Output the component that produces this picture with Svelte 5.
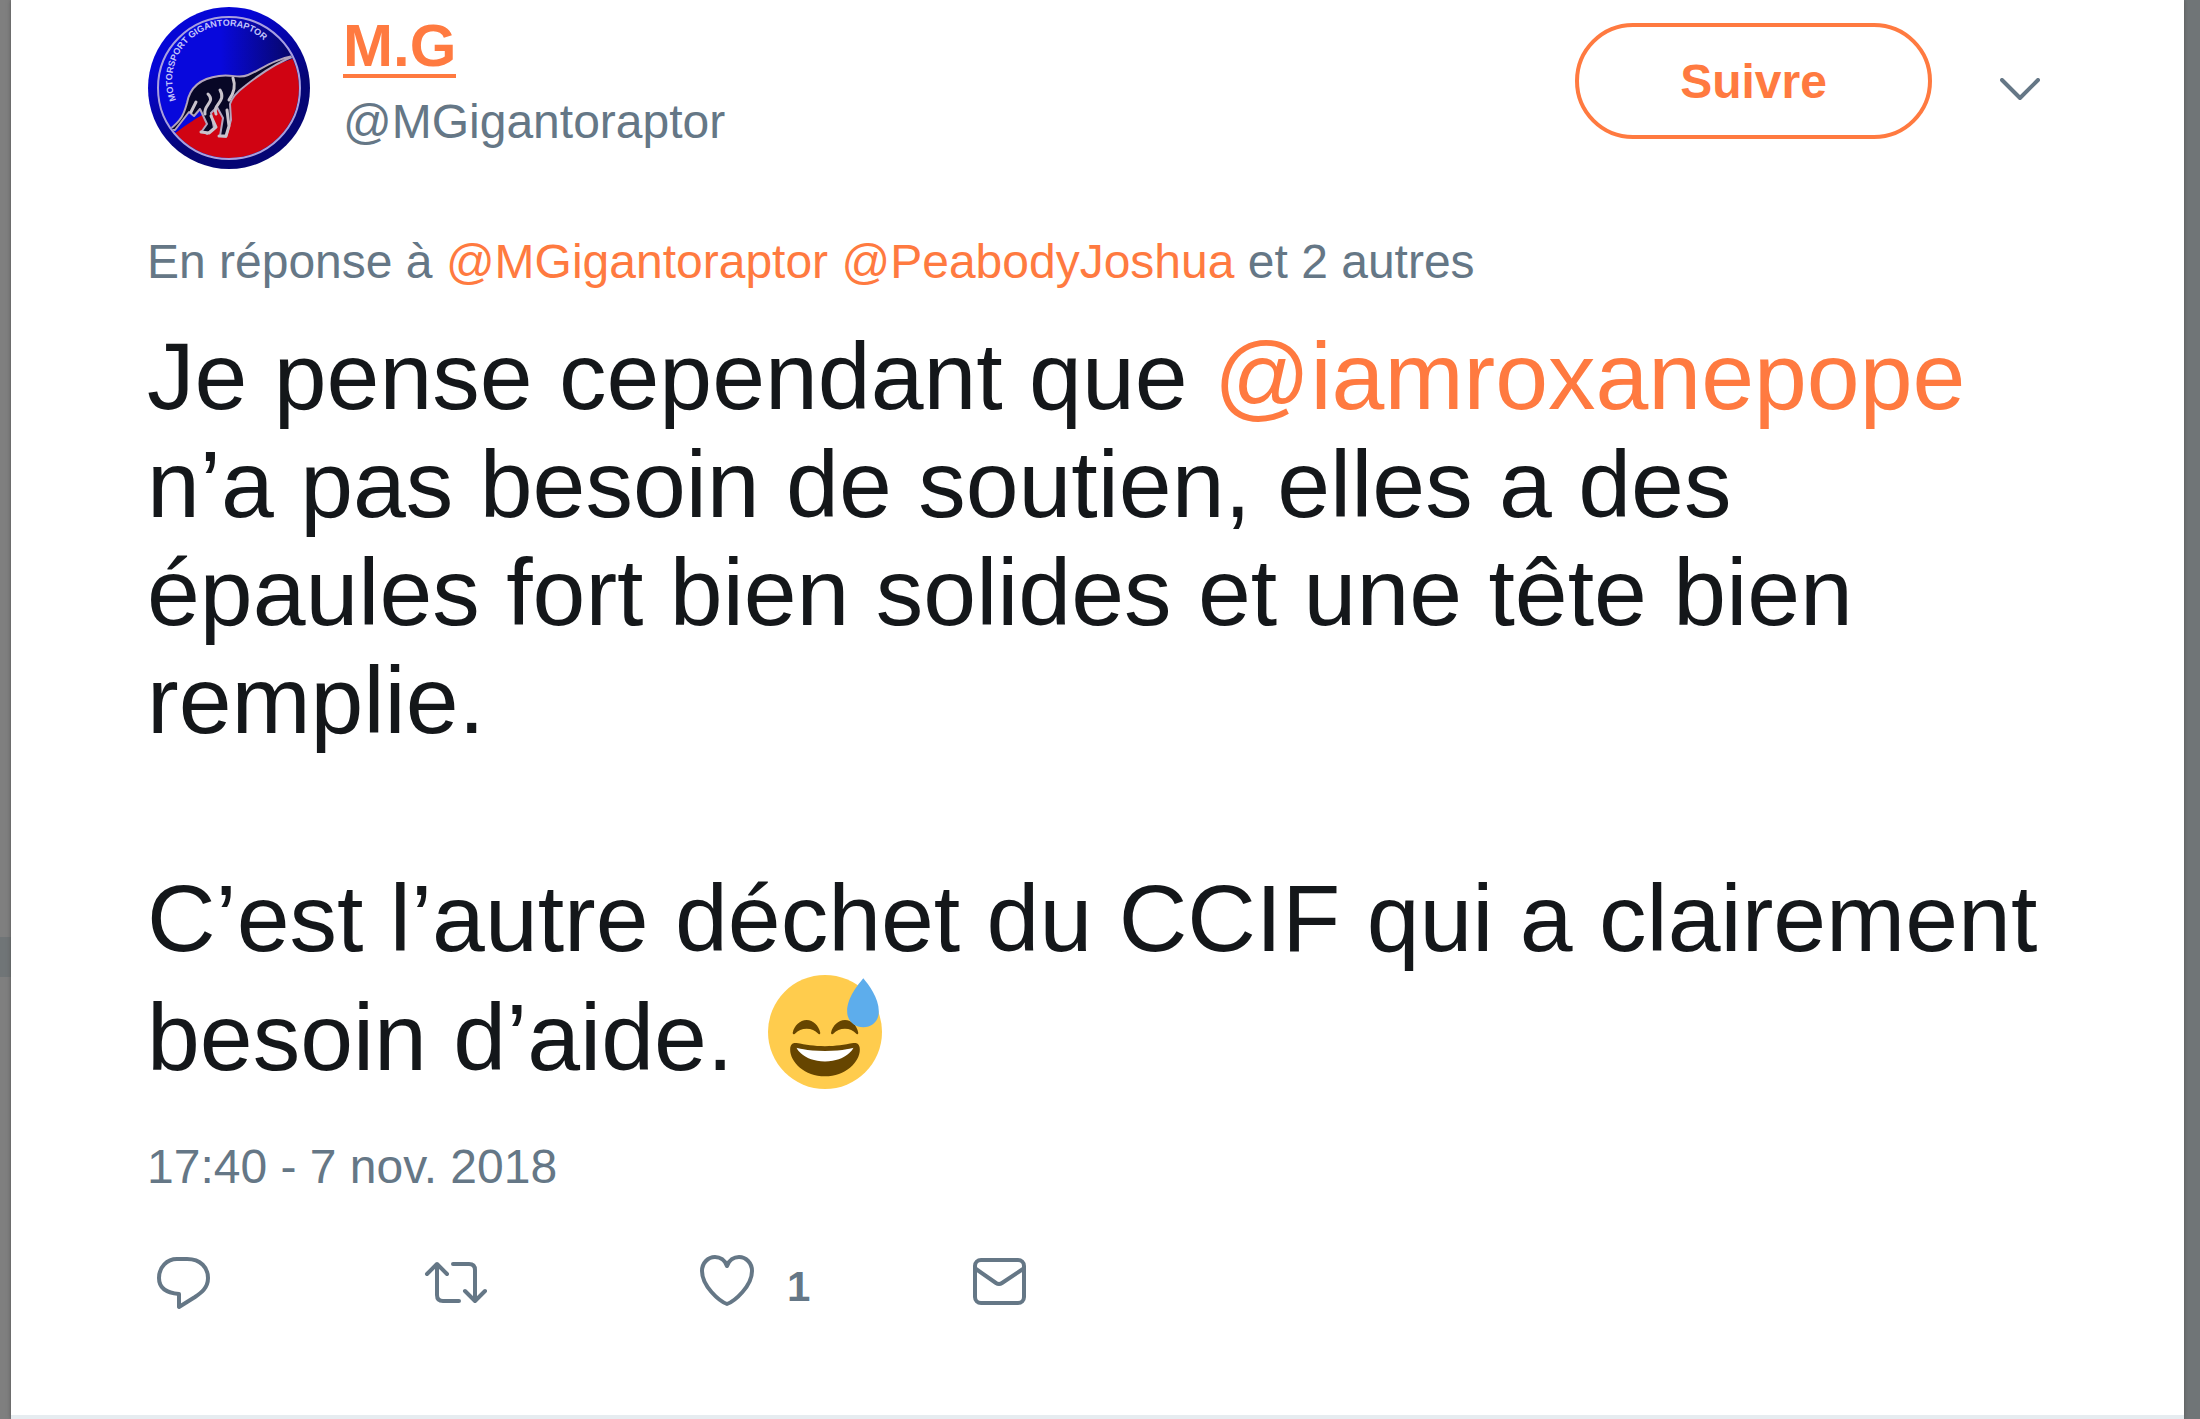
<script lang="ts">
	const replyTo = ['@MGigantoraptor', '@PeabodyJoshua'];
	let likes = $state(1);
</script>

<div class="backdrop">
	<article class="tweet">
		<header class="header">
			<a class="avatar" href="#profile" aria-label="M.G">
				<svg viewBox="0 0 164 164">
					<defs>
						<linearGradient id="ring" x1="0" y1="0" x2="0.6" y2="1">
							<stop offset="0.3" stop-color="#0606d6" />
							<stop offset="0.75" stop-color="#050574" />
						</linearGradient>
						<linearGradient id="sky" x1="0" y1="0" x2="1" y2="0">
							<stop offset="0.45" stop-color="#0808dc" />
							<stop offset="0.9" stop-color="#070764" />
						</linearGradient>
						<clipPath id="disc"><circle cx="82" cy="82" r="70" /></clipPath>
						<path id="arc" d="M29 94a54 54 0 0 1 101 -40" />
					</defs>
					<circle cx="82" cy="82" r="81" fill="url(#ring)" />
					<g clip-path="url(#disc)">
						<rect width="164" height="164" fill="url(#sky)" />
						<path d="M22 132C50 110 66 103 86 92C104 74 122 56 166 48V164H22Z" fill="#d00312" />
						<path d="M22 124C36 113 37 107 40 97C43 80 56 72 72 70C86 68 92 73 101 69C114 64 124 54 150 49C130 56 108 72 98 80C90 86 85 91 83 98L84 114L79 131L73 130L76 112L70 101L64 107L67 122L60 128L55 125L60 118L53 103L47 110L42 106L28 124Z" fill="#080726" stroke="#b3a4bd" stroke-width="2" />
						<path d="M61 88C69 96 56 99 58 108M73 84C80 96 65 98 69 108M86 72Q90 83 82 94M49 96L44 106M64 110L69 121L62 127L54 126M80 104L82 120L79 130L72 130" fill="none" stroke="#c9c3cc" stroke-width="3" />
					</g>
					<circle cx="82" cy="82" r="71" fill="none" stroke="#a9a0df" stroke-width="2" />
					<text class="badge-text"><textPath href="#arc">MOTORSPORT GIGANTORAPTOR</textPath></text>
				</svg>
			</a>
			<div class="names">
				<a class="fullname" href="#profile">M.G</a>
				<a class="username" href="#profile">@MGigantoraptor</a>
			</div>
			<button class="follow">Suivre</button>
			<button class="more" aria-label="Plus">
				<svg viewBox="0 0 40 24"><path d="M2 2L20 20L38 2" /></svg>
			</button>
		</header>

		<p class="context">
			En réponse à
			{#each replyTo as name}
				<a href="#profile">{name}</a>{' '}
			{/each}
			et 2 autres
		</p>

		<div class="text">
			<p>
				Je pense cependant que <a href="#profile">@iamroxanepope</a> n’a pas besoin de soutien, elles a des
				épaules fort bien solides et une tête bien remplie.
			</p>
			<p>
				C’est l’autre déchet du CCIF qui a clairement besoin d’aide.
				<svg class="emoji" viewBox="0 0 36 36" role="img" aria-label="Sourire avec goutte de sueur">
					<circle cx="18" cy="18" r="18" fill="#ffcc4d" />
					<path d="M28.5 18.2c-.4-2.2-2.1-4-4.2-4s-3.9 1.8-4.4 4c-.1.4.5.7.8.3.9-1 2.1-1.5 3.6-1.5s2.6.5 3.5 1.5c.3.4.8.1.7-.3zM16.500 18.2c-.5-2.2-2.2-4-4.300-4s-3.900 1.800-4.400 4c-.1.4.5.7.8.3.9-1 2.1-1.5 3.6-1.5s2.7.5 3.6 1.5c.3.4.8.1.7-.3z" fill="#664500" />
					<path d="M18 22.500c-3.600 0-6-.5-9-1-.7-.1-2 0-2 2C7 27.500 11.600 32 18 32s11-4.500 11-8.500c0-2-1.300-2.100-2-2-3 .5-5.400 1-9 1z" fill="#664500" />
					<path d="M9 23s3 1 9 1 9-1 9-1-2 4.300-9 4.300S9 23 9 23z" fill="#fff" />
					<path d="M35 11.500c0 3-2.100 5-4.900 5S25 14.500 25 11.500C25 7 28.500 3 30.100 1 31.700 3 35 7 35 11.500z" fill="#5dadec" />
				</svg>
			</p>
		</div>

		<time class="date" datetime="2018-11-07T17:40">17:40 - 7 nov. 2018</time>

		<footer class="actions">
			<button aria-label="Répondre">
				<svg viewBox="0 0 72 72"><path d="M30 12H40C54 12 61 21 61 31C61 41 54 46 48 50L32 60V47C20 46 12 41 12 31C12 20 20 12 30 12Z" /></svg>
			</button>
			<button aria-label="Retweeter">
				<svg viewBox="0 0 72 72"><path d="M8 27L18 17L28 27M18 18V48Q18 54 24 54H40M34 17H50Q56 17 56 23V53M46 44L56 54L66 44" /></svg>
			</button>
			<button aria-label="J’aime" onclick={() => likes++}>
				<svg viewBox="0 0 72 72"><path d="M36 57C28 54 11 39 11 24C11 16 17 10 24 10C29 10 34 13 36 19C38 13 43 10 48 10C55 10 61 16 61 24C61 39 44 54 36 57Z" /></svg>
				<span class="count">{likes}</span>
			</button>
			<button aria-label="Message privé">
				<svg viewBox="0 0 72 72"><rect x="12" y="13" width="49" height="43" rx="6" /><path d="M13 22L33 36Q36 38 39 36L60 22" /></svg>
			</button>
		</footer>
	</article>
</div>

<style>
	:global(body) {
		margin: 0;
		background: #7f7f7f;
	}
	.backdrop {
		padding: 0 16px 0 11px;
		background:
			linear-gradient(#707577, #707577) 0 937px / 11px 40px no-repeat,
			linear-gradient(90deg, #7f7f7f 50%, #707577 50%);
		font-family: "Liberation Sans", Arial, sans-serif;
	}
	.tweet {
		padding: 6px 136px 96px;
		background: #fff;
		border-bottom: 4px solid #e6ecf0;
		color: #14171a;
		box-shadow: 0 0 4px #555;
	}
	a {
		color: #ff7a40;
		text-decoration: none;
	}
	p {
		margin: 0;
	}
	button {
		padding: 0;
		border: none;
		background: none;
		font: inherit;
		cursor: pointer;
	}
	svg {
		display: block;
		fill: none;
		stroke-linejoin: round;
		stroke-linecap: round;
	}
	.header {
		display: flex;
		align-items: flex-start;
		padding-right: 8px;
	}
	.avatar {
		width: 164px;
		margin-right: 32px;
	}
	.badge-text {
		fill: #c4c4fa;
		font-size: 9px;
		font-weight: 700;
	}
	.names {
		display: flex;
		flex: 1;
		flex-direction: column;
		align-items: flex-start;
		gap: 16px;
		padding-top: 12px;
	}
	.fullname {
		border-bottom: 4px solid;
		font-size: 60px;
		font-weight: 700;
		line-height: 56px;
	}
	.username {
		color: #657786;
		font-size: 48px;
		line-height: 56px;
	}
	.follow {
		box-sizing: border-box;
		width: 357px;
		height: 116px;
		margin-top: 17px;
		border: 4px solid #ff7a40;
		border-radius: 58px;
		color: #ff7a40;
		font-size: 48px;
		font-weight: 700;
	}
	.more {
		width: 40px;
		margin: 72px 0 0 68px;
	}
	.more path,
	.actions path,
	.actions rect {
		stroke: #657786;
		stroke-width: 4px;
	}
	.context {
		margin-top: 64px;
		color: #657786;
		font-size: 48px;
		line-height: 56px;
	}
	.text {
		margin-top: 32px;
		font-size: 95px;
		line-height: 108px;
	}
	.text p + p {
		margin-top: 110px;
	}
	.emoji {
		display: inline-block;
		width: 114px;
		height: 116px;
		margin: 2px 0 0 8px;
		vertical-align: -20px;
	}
	.date {
		display: block;
		margin-top: 48px;
		color: #657786;
		font-size: 48px;
		line-height: 56px;
	}
	.actions {
		display: flex;
		margin-top: 52px;
	}
	.actions button {
		display: flex;
		align-items: center;
		width: 272px;
	}
	.actions svg {
		width: 72px;
		height: 72px;
	}
	.count {
		margin-left: 24px;
		padding-top: 8px;
		color: #657786;
		font-size: 42px;
		font-weight: 700;
		line-height: 48px;
	}
</style>
